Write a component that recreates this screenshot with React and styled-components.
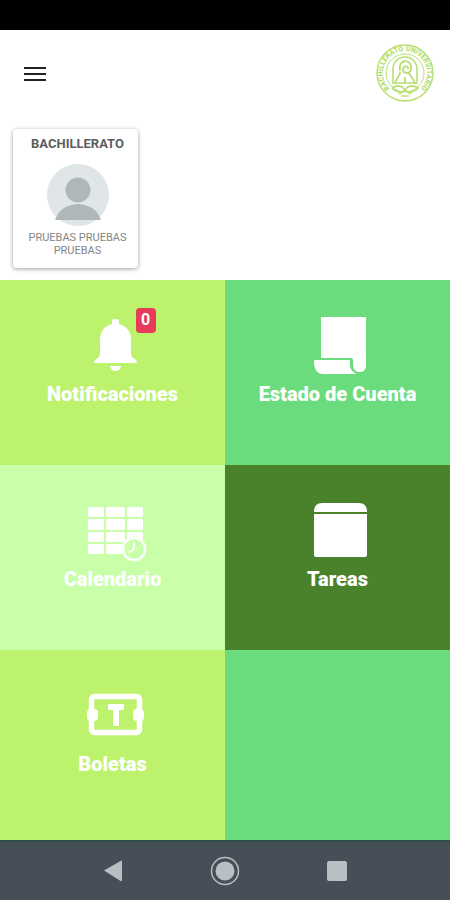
import React from "react";
import styled, { createGlobalStyle } from "styled-components";

const GlobalStyle = createGlobalStyle`
  * { box-sizing: border-box; }
  body { margin: 0; background: #fff; font-family: Roboto, "Liberation Sans", sans-serif; }
  button { font: inherit; color: inherit; border: 0; padding: 0; background: none; cursor: pointer; }
  svg { display: block; overflow: visible; }
`;

const Screen = styled.div`
  min-height: 100vh;
  display: flex;
  flex-direction: column;
`;

const StatusBar = styled.div`
  height: 30px;
  background: #000;
`;

const Header = styled.header`
  display: flex;
  align-items: center;
  justify-content: space-between;
  height: 88px;
  padding: 0 15px;
`;

const MenuButton = styled.button`
  display: grid;
  place-items: center;
  width: 40px;
  height: 40px;
`;

const Students = styled.section`
  display: flex;
  padding: 11px 13px 12px;
`;

const StudentCard = styled.button`
  display: flex;
  flex-direction: column;
  align-items: center;
  width: 125px;
  height: 139px;
  padding: 7px 8px 0 12px;
  border-radius: 4px;
  background: #fff;
  box-shadow: 0 1px 4px rgba(0, 0, 0, 0.38);
`;

const Level = styled.strong`
  font-size: 13px;
  line-height: 16px;
  font-weight: 700;
  color: #5c5c5c;
`;

const Avatar = styled.svg`
  margin: 12px 0 5px;
`;

const StudentName = styled.span`
  font-size: 11px;
  line-height: 13px;
  color: #858585;
`;

const Tiles = styled.main`
  flex: 1;
  display: grid;
  grid-template-columns: 1fr 1fr;
  grid-template-rows: 185fr 185fr 190fr;
`;

const Tile = styled.button`
  display: flex;
  flex-direction: column;
  align-items: center;
  gap: 4px;
  padding-top: 34px;
  background: ${(p) => p.$color};
  color: #fff;
`;

const EmptyTile = styled.div`
  background: #6bdc7d;
`;

const TileIcon = styled.span`
  position: relative;
  width: 64px;
  height: 64px;
`;

const TileLabel = styled.span`
  font-size: 20px;
  line-height: 24px;
  font-weight: 900;
`;

const Badge = styled.span`
  position: absolute;
  top: -6px;
  left: 55px;
  width: 20px;
  height: 25px;
  border-radius: 4px;
  background: #e63c59;
  font-size: 16px;
  line-height: 24px;
  font-weight: 700;
  text-align: center;
`;

const NavBar = styled.nav`
  display: grid;
  grid-template-columns: repeat(3, 112px);
  justify-content: center;
  height: 60px;
  border-top: 2px solid #2f4d48;
  background: #464e57;
`;

const NavButton = styled.button`
  display: grid;
  place-items: center;
`;

const Logo = () => (
  <svg width="60" height="60" viewBox="0 0 60 60" fill="none" stroke="#b8df70" role="img" aria-label="Bachillerato Universitario">
    <circle cx="30" cy="29" r="28" strokeWidth="1.4" />
    <circle cx="30" cy="29" r="19" strokeWidth="1" />
    <path id="logo-ring" d="M15.200 45.200A22 22 0 1 1 44.800 45.200" stroke="none" />
    <text fill="#add957" stroke="none" fontSize="7" fontWeight="700">
      <textPath href="#logo-ring" startOffset="50%" textAnchor="middle">BACHILLERATO UNIVERSITARIO</textPath>
    </text>
    <path d="M18 38V25a12 12 0 0 1 24 0v13" strokeWidth="1.6" />
    <path d="M25 27c-3-12 12-13 11-3 0 7-9 6-8 1 1-4 6-3 5 0M25 28c1 4-4 5-5 12M34 29c1 4 5 5 6 11M30 33v6" strokeWidth="1.8" />
    <path d="M17 39h26M17 44q8-5 13 2 5-7 13-2-7 7-13 2-6 5-13-2M24 50l6-4 6 4M26 52h8" strokeWidth="1.6" />
  </svg>
);

const BellIcon = () => (
  <svg width="64" height="64" viewBox="0 0 64 64" fill="currentColor">
    <path d="M31 7q0-2 2-2h3q2 0 2 2v3c8 2 12 8 12 15v14c0 4 2 5 5 7q1 1 1 3H13q0-2 1-3c3-2 5-3 5-7V25c0-7 4-13 12-15zM29 52h11q-1 5-5.500 5T29 52z" />
  </svg>
);

const StatementIcon = () => (
  <svg width="64" height="64" viewBox="0 0 64 64" fill="currentColor">
    <path d="M15 3h45v50q-1 5-6 5-6 0-7-6v-6q0-2-2-2H15z" />
    <path d="M8 46h36v6q1 6 7 8H16q-7-1-8-10z" />
  </svg>
);

const CalendarIcon = () => (
  <svg width="64" height="64" viewBox="0 0 64 64" fill="currentColor">
    {[8, 20, 33, 45].map((y, row) =>
      [7, 25, 46].map((x, col) => (
        <rect key={`${x}-${y}`} x={x} y={y} width={col === 1 ? 19 : 16} height={row === 1 ? 11 : 10} rx="1.5" />
      ))
    )}
    <circle cx="53" cy="50" r="12.500" fill="#c8ffa8" />
    <circle cx="53" cy="50" r="11" fill="none" stroke="currentColor" strokeWidth="2.500" />
    <path d="M53 43v6q-1 3-5 4" fill="none" stroke="currentColor" strokeWidth="2" />
  </svg>
);

const TasksIcon = () => (
  <svg width="64" height="64" viewBox="0 0 64 64" fill="currentColor">
    <path d="M8 13q0-9 8-9h37q8 0 8 9z" />
    <path d="M8 15h53v41q0 2-2 2H10q-2 0-2-2z" />
  </svg>
);

const TicketIcon = () => (
  <svg width="64" height="64" viewBox="0 0 64 64" fill="currentColor">
    <rect x="10.500" y="12.500" width="48" height="36" rx="3" fill="none" stroke="currentColor" strokeWidth="5.500" />
    <rect x="6" y="25" width="11" height="12" rx="4" />
    <rect x="52" y="25" width="11" height="12" rx="4" />
    <path d="M27 20h16v6h-5v16h-6V26h-5z" />
  </svg>
);

const tiles = [
  { label: "Notificaciones", color: "#bdf26d", Icon: BellIcon, count: 0 },
  { label: "Estado de Cuenta", color: "#6bdc7d", Icon: StatementIcon },
  { label: "Calendario", color: "#c8ffa8", Icon: CalendarIcon },
  { label: "Tareas", color: "#4a812b", Icon: TasksIcon },
  { label: "Boletas", color: "#bdf26d", Icon: TicketIcon },
];

export default function App() {
  return (
    <Screen>
      <GlobalStyle />
      <StatusBar />
      <Header>
        <MenuButton aria-label="Menú">
          <svg width="24" height="16" viewBox="0 0 24 16" fill="none" stroke="#222" strokeWidth="2.2">
            <path d="M1 2h22M1 8h22M1 14h22" />
          </svg>
        </MenuButton>
        <Logo />
      </Header>
      <Students>
        <StudentCard>
          <Level>BACHILLERATO</Level>
          <Avatar width="62" height="62" viewBox="0 0 62 62">
            <circle cx="31" cy="31" r="31" fill="#e0e5e8" />
            <circle cx="31" cy="26" r="12.500" fill="#b0b7ba" />
            <path d="M8 56q5-15 23-16 18 1 23 16z" fill="#b0b7ba" />
          </Avatar>
          <StudentName>PRUEBAS PRUEBAS PRUEBAS</StudentName>
        </StudentCard>
      </Students>
      <Tiles>
        {tiles.map(({ label, color, Icon, count }) => (
          <Tile key={label} $color={color}>
            <TileIcon>
              <Icon />
              {count !== undefined && <Badge>{count}</Badge>}
            </TileIcon>
            <TileLabel>{label}</TileLabel>
          </Tile>
        ))}
        <EmptyTile />
      </Tiles>
      <NavBar>
        <NavButton aria-label="Atrás">
          <svg width="20" height="22" viewBox="0 0 20 22" fill="#b9bfc3">
            <path d="M1 10.500 18 .8q1-.5 1 1v18.400q0 1.500-1 1z" />
          </svg>
        </NavButton>
        <NavButton aria-label="Inicio">
          <svg width="30" height="30" viewBox="0 0 30 30">
            <circle cx="15" cy="15" r="13.500" fill="none" stroke="#b9bfc3" strokeWidth="1.500" />
            <circle cx="15" cy="15" r="9.500" fill="#b9bfc3" />
          </svg>
        </NavButton>
        <NavButton aria-label="Recientes">
          <svg width="20" height="20" viewBox="0 0 20 20" fill="#b9bfc3">
            <rect width="20" height="20" rx="2" />
          </svg>
        </NavButton>
      </NavBar>
    </Screen>
  );
}
